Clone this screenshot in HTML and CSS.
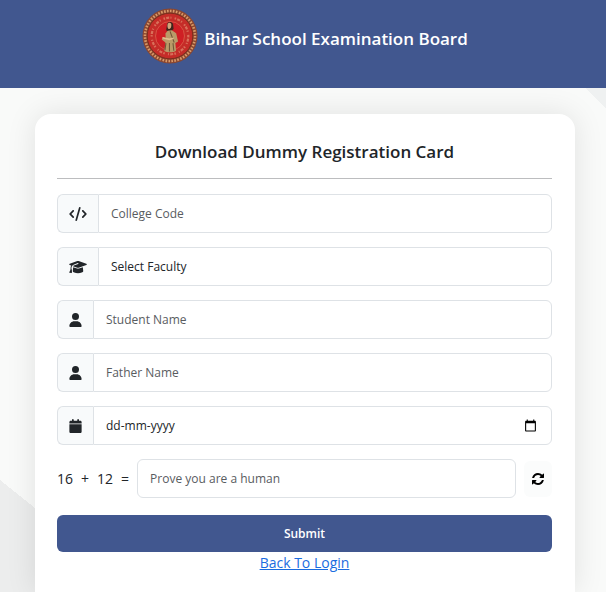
FILE: index.html
```
<!DOCTYPE html>
<html lang="en">

<head>
    <meta charset="UTF-8">
    <meta name="viewport" content="width=device-width, initial-scale=1.0">
    <title>Download Dummy Registration Card</title>
    <link rel="stylesheet" href="styles.css">
</head>

<body>
    <header class="header">
        <svg class="logo" viewBox="0 0 56 56" aria-hidden="true">
            <circle cx="28" cy="28" r="27.5" fill="#8a4630"/>
            <circle cx="28" cy="28" r="25" fill="none" stroke="#d99a68" stroke-width="2.6" stroke-dasharray="1.6 1.4"/>
            <circle cx="28" cy="28" r="22.8" fill="#c52c28" stroke="#7d2d1c" stroke-width="1"/>
            <circle cx="28" cy="28" r="18.3" fill="none" stroke="#d9705a" stroke-width="2.2" stroke-dasharray="1.5 1.2 3 1.4 1 3.2"/>
            <circle cx="28" cy="28" r="14.5" fill="#cf1f24" stroke="#dc6a52" stroke-width="0.7"/>
            <g transform="translate(-5 -5) scale(1.18)">
                <path d="M25.500 18c.3-2.400 4.500-2.800 5.100 0l.4 4-2 2h-3l-1.300-1z" fill="#3d251c"/>
                <path d="M26 17.500c1-1.400 3-1 3.100.8.2 2.300-.7 3.600-1.700 3.700-1.300 0-2-2-1.400-4.500z" fill="#d3a47a"/>
                <path d="M26 23.500l3.500-.5 3.700 2.600 1.600 7-2.300 1.400.6 6.500c-2.500 1.700-7.500 1.700-10 .2l1-7.200-3.200-2.500 1.400-2.200 2 1-.2-4z" fill="#b99b68"/>
                <path d="M28 24l3.500 9.500M24.500 34l-.8 6M27.500 34v7M30.500 34l.7 6.500" fill="none" stroke="#705638" stroke-width="0.9"/>
                <path d="M21.500 29.500l6 1.300 3.500-1" fill="none" stroke="#e1bd8e" stroke-width="1.3"/>
            </g>
        </svg>
        <h1>Bihar School Examination Board</h1>
    </header>

    <main class="page">
        <div class="card">
            <h2>Download Dummy Registration Card</h2>
            <hr>

            <form>
                <!-- College code -->
                <div class="input-group">
                    <label class="icon" for="college-code" aria-label="College Code">
                        <svg class="wide" viewBox="0 0 640 512"><path d="M392.8 1.200c-17-4.900-34.700 5-39.600 22l-128 448c-4.900 17 5 34.700 22 39.600s34.700-5 39.600-22l128-448c4.900-17-5-34.700-22-39.600zm80.600 120.100c-12.500 12.500-12.500 32.800 0 45.300L562.700 256l-89.400 89.400c-12.500 12.500-12.500 32.800 0 45.300s32.800 12.500 45.300 0l112-112c12.500-12.500 12.500-32.800 0-45.300l-112-112c-12.500-12.500-32.800-12.500-45.300 0zm-306.700 0c-12.500-12.500-32.800-12.500-45.300 0l-112 112c-12.500 12.500-12.500 32.800 0 45.300l112 112c12.500 12.500 32.800 12.500 45.300 0s12.500-32.800 0-45.300L77.300 256l89.400-89.400c12.500-12.500 12.500-32.800 0-45.300z"/></svg>
                    </label>
                    <input class="form-control" type="text" id="college-code" placeholder="College Code">
                </div>

                <!-- Faculty -->
                <div class="input-group">
                    <label class="icon" for="faculty" aria-label="Faculty">
                        <svg class="wide" viewBox="0 0 640 512"><path d="M320 32c-8.100 0-16.100 1.400-23.700 4.100L15.800 137.400C6.300 140.900 0 149.900 0 160s6.300 19.100 15.800 22.600l57.900 20.900C57.300 229.300 48 259.800 48 291.900v28.100c0 28.400-10.800 57.700-22.300 80.800c-6.500 13-13.900 25.800-22.500 37.600C0 442.700-.9 448.300 .9 453.400s6 8.900 11.200 10.200l64 16c4.200 1.100 8.700 .3 12.400-2s6.300-6.100 7.100-10.400c8.600-42.800 4.300-81.200-2.100-108.700C90.300 344.300 86 329.800 80 316.500V291.900c0-30.200 10.200-58.700 27.900-81.500c12.900-15.500 29.600-28 49.200-35.700l157-61.700c8.200-3.200 17.500 .8 20.700 9s-.8 17.500-9 20.700l-157 61.700c-12.400 4.900-23.300 12.400-32.200 21.600l159.600 57.600c7.600 2.700 15.600 4.100 23.700 4.100s16.100-1.400 23.700-4.100L624.200 182.600c9.500-3.400 15.800-12.500 15.800-22.600s-6.300-19.100-15.800-22.600L343.700 36.100C336.100 33.400 328.100 32 320 32zM128 408c0 35.300 86 72 192 72s192-36.700 192-72L496.700 262.600 354.500 314c-11.100 4-22.800 6-34.500 6s-23.500-2-34.500-6L143.300 262.600 128 408z"/></svg>
                    </label>
                    <select class="form-control" id="faculty">
                        <option>Select Faculty</option>
                    </select>
                </div>

                <!-- Student name -->
                <div class="input-group">
                    <label class="icon" for="student-name" aria-label="Student Name">
                        <svg viewBox="0 0 448 512"><path d="M224 256A128 128 0 1 0 224 0a128 128 0 1 0 0 256zm-45.700 48C79.800 304 0 383.800 0 482.300C0 498.700 13.300 512 29.700 512H418.300c16.400 0 29.700-13.300 29.700-29.700C448 383.800 368.200 304 269.700 304H178.300z"/></svg>
                    </label>
                    <input class="form-control" type="text" id="student-name" placeholder="Student Name">
                </div>

                <!-- Father name -->
                <div class="input-group">
                    <label class="icon" for="father-name" aria-label="Father Name">
                        <svg viewBox="0 0 448 512"><path d="M224 256A128 128 0 1 0 224 0a128 128 0 1 0 0 256zm-45.700 48C79.800 304 0 383.800 0 482.300C0 498.700 13.300 512 29.700 512H418.300c16.400 0 29.700-13.300 29.700-29.700C448 383.800 368.200 304 269.700 304H178.300z"/></svg>
                    </label>
                    <input class="form-control" type="text" id="father-name" placeholder="Father Name">
                </div>

                <!-- Date of birth -->
                <div class="input-group">
                    <label class="icon" for="dob" aria-label="Date of Birth">
                        <svg viewBox="0 0 448 512"><path d="M96 32V64H48C21.500 64 0 85.500 0 112v48H448V112c0-26.500-21.500-48-48-48H352V32c0-17.700-14.300-32-32-32s-32 14.300-32 32V64H160V32c0-17.700-14.300-32-32-32S96 14.300 96 32zM448 192H0V464c0 26.500 21.500 48 48 48H400c26.500 0 48-21.500 48-48V192z"/></svg>
                    </label>
                    <div class="form-control date">
                        <input type="text" id="dob" placeholder="dd-mm-yyyy">
                        <button type="button" class="picker" aria-label="Show date picker">
                            <svg viewBox="0 0 24 24"><path d="M20 3h-1V1h-2v2H7V1H5v2H4c-1.100 0-2 .9-2 2v16c0 1.100.9 2 2 2h16c1.100 0 2-.9 2-2V5c0-1.100-.9-2-2-2zm0 18H4V8h16v13z"/></svg>
                        </button>
                    </div>
                </div>

                <!-- Captcha -->
                <div class="captcha">
                    <label for="captcha">
                        <span>16</span>
                        <span>+</span>
                        <span>12</span>
                        <span>=</span>
                    </label>
                    <input class="form-control" type="text" id="captcha" placeholder="Prove you are a human">
                    <button type="button" class="refresh" aria-label="Refresh">
                        <svg viewBox="0 0 1536 1536"><path d="M1511 928q0 5-1 7-64 268-268 434.500T764 1536q-146 0-282.500-55T238 1324l-129 129q-19 19-45 19t-45-19-19-45V960q0-26 19-45t45-19h448q26 0 45 19t19 45-19 45l-137 137q71 66 161 102t187 36q134 0 250-65t186-179q11-17 53-117 8-23 30-23h192q13 0 22.500 9.500t9.500 22.500zm25-800v448q0 26-19 45t-45 19h-448q-26 0-45-19t-19-45 19-45l138-138Q969 256 768 256q-134 0-250 65T332 500q-11 17-53 117-8 23-30 23H50q-13 0-22.500-9.500T18 608v-7q65-268 270-434.500T768 0q146 0 284 55.500T1297 212l130-129q19-19 45-19t45 19 19 45z"/></svg>
                    </button>
                </div>

                <button type="submit" class="submit-btn">Submit</button>
            </form>

            <a class="back-link" href="#">Back To Login</a>
        </div>
    </main>
</body>

</html>
```

FILE: styles.css
```
* {
    margin: 0;
    padding: 0;
    box-sizing: border-box;
}

body {
    font-family: 'Segoe UI', 'Open Sans', 'Noto Sans', sans-serif;
    font-size: 14px;
    color: #212529;
    display: flex;
    flex-direction: column;
    min-height: 100vh;
    background-color: #f9faf9;
}

input,
select,
button {
    font: inherit;
    color: inherit;
}

.header {
    display: flex;
    justify-content: center;
    align-items: flex-start;
    gap: 6px;
    padding: 8px 16px 24px 20px;
    background-color: #41578f;
}

.logo {
    width: 56px;
    height: 56px;
}

.header h1 {
    font-size: 17px;
    font-weight: 600;
    line-height: 24px;
    padding-top: 19px;
    color: #fff;
}

/* page background with the two grey corners */
.page {
    flex: 1;
    display: flex;
    justify-content: center;
    padding: 26px 31px 0 35px;
    background-image:
        linear-gradient(to bottom left, transparent 50%, #eceded 50%),
        linear-gradient(to top right, transparent 50%, #eff1f1 50%);
    background-size: 140px 112px, 20px 20px;
    background-position: left bottom, right top;
    background-repeat: no-repeat;
}

.card {
    width: 100%;
    max-width: 540px;
    padding: 26px 23px 16px 22px;
    background-color: #fff;
    border-radius: 16px 16px 0 0;
    box-shadow: 0 0 30px rgba(0, 0, 0, 0.1);
}

h2 {
    font-size: 17px;
    font-weight: 600;
    line-height: 24px;
    text-align: center;
}

hr {
    border: none;
    border-top: 1px solid #bcbdbf;
    margin: 14px 0 15px;
}

.input-group {
    display: flex;
    margin-bottom: 14px;
}

.icon {
    display: flex;
    align-items: center;
    padding: 0 11px;
    background-color: #f8fafb;
    border: 1px solid #dee2e6;
    border-right: none;
    border-radius: 6px 0 0 6px;
}

.icon svg {
    width: 13px;
    height: 14px;
    fill: #212529;
}

.icon svg.wide {
    width: 18px;
}

.form-control {
    flex: 1;
    min-width: 0;
    height: 39px;
    padding: 0 12px;
    font-size: 12px;
    background-color: #fff;
    border: 1px solid #dee2e6;
    border-radius: 6px;
    appearance: none;
}

.input-group .form-control {
    border-radius: 0 6px 6px 0;
}

.form-control::placeholder {
    color: #595c5f;
}

.date {
    display: flex;
    align-items: center;
}

.date input {
    flex: 1;
    min-width: 0;
    border: none;
    outline: none;
}

.date input::placeholder {
    color: #212529;
}

.picker {
    display: flex;
    padding: 0 2px;
    background: none;
    border: none;
}

.picker svg {
    width: 13px;
    height: 13px;
}

.captcha {
    display: flex;
    align-items: center;
    margin-bottom: 17px;
}

.captcha label {
    display: flex;
    gap: 8px;
    margin-right: 8px;
}

.refresh {
    display: flex;
    margin-left: 8px;
    padding: 12px 8px;
    background-color: #fbfcfc;
    border: none;
    border-radius: 6px;
}

.refresh svg {
    width: 12px;
    height: 12px;
}

.submit-btn {
    display: block;
    width: 100%;
    height: 37px;
    font-size: 12px;
    font-weight: 600;
    color: #fff;
    background-color: #41578f;
    border: none;
    border-radius: 6px;
    cursor: pointer;
}

.back-link {
    display: block;
    width: fit-content;
    margin: 0 auto;
    line-height: 22px;
    color: #1a6ce0;
}
```
